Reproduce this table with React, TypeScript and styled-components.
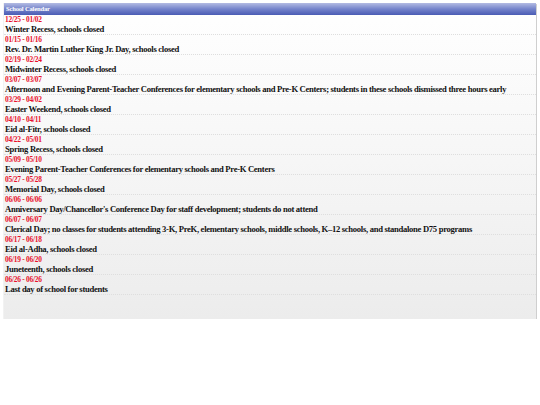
import { FC } from 'react';
import styled, { createGlobalStyle } from 'styled-components';

const events = [
    { dates: '12/25 - 01/02', title: 'Winter Recess, schools closed' },
    { dates: '01/15 - 01/16', title: 'Rev. Dr. Martin Luther King Jr. Day, schools closed' },
    { dates: '02/19 - 02/24', title: 'Midwinter Recess, schools closed' },
    {
        dates: '03/07 - 03/07',
        title: 'Afternoon and Evening Parent-Teacher Conferences for elementary schools and Pre-K Centers; students in these schools dismissed three hours early',
    },
    { dates: '03/29 - 04/02', title: 'Easter Weekend, schools closed' },
    { dates: '04/10 - 04/11', title: 'Eid al-Fitr, schools closed' },
    { dates: '04/22 - 05/01', title: 'Spring Recess, schools closed' },
    { dates: '05/09 - 05/10', title: 'Evening Parent-Teacher Conferences for elementary schools and Pre-K Centers' },
    { dates: '05/27 - 05/28', title: 'Memorial Day, schools closed' },
    {
        dates: '06/06 - 06/06',
        title: "Anniversary Day/Chancellor's Conference Day for staff development; students do not attend",
    },
    {
        dates: '06/07 - 06/07',
        title: 'Clerical Day; no classes for students attending 3-K, PreK, elementary schools, middle schools, K–12 schools, and standalone D75 programs',
    },
    { dates: '06/17 - 06/18', title: 'Eid al-Adha, schools closed' },
    { dates: '06/19 - 06/20', title: 'Juneteenth, schools closed' },
    { dates: '06/26 - 06/26', title: 'Last day of school for students' },
];

const App: FC = () => {
    return (
        <>
            <GlobalStyle />
            <Panel>
                <Header>School Calendar</Header>
                <List>
                    {events.map((ev) => (
                        <Row key={ev.dates + ev.title}>
                            <Dates>{ev.dates}</Dates>
                            <Title>{ev.title}</Title>
                        </Row>
                    ))}
                </List>
            </Panel>
        </>
    );
};

export default App;

const GlobalStyle = createGlobalStyle`
    html, body {
        margin: 0;
        padding: 0;
        background: #fff;
    }
    body {
        padding: 3px 3px 0 3px;
        font-family: 'Liberation Serif', 'Times New Roman', serif;
    }
`;

const Panel = styled.div`
    box-sizing: border-box;
    width: 533px;
    height: 316px;
    display: flex;
    flex-direction: column;
    background: linear-gradient(to bottom, #ffffff 0%, #f6f6f6 50%, #ececec 100%);
    box-shadow: 1px 1px 0 #cfcfcf;
    border-left: 1px solid #f2f2f2;
`;

const Header = styled.div`
    height: 12px;
    line-height: 12px;
    padding-left: 2px;
    color: #fff;
    font-size: 6.6px;
    font-weight: bold;
    letter-spacing: -0.2px;
    background: linear-gradient(to bottom, #b3bbe3 0%, #7584cb 50%, #4a5cb4 100%);
`;

const List = styled.div`
    display: flex;
    flex-direction: column;
`;

const Row = styled.div`
    box-sizing: border-box;
    height: 20px;
    padding: 1px 0 0 1px;
    display: flex;
    flex-direction: column;
    border-bottom: 1px dotted #dedede;
`;

const Dates = styled.div`
    color: #e8102a;
    font-size: 7.4px;
    font-weight: bold;
    letter-spacing: -0.25px;
    line-height: 8px;
`;

const Title = styled.div`
    color: #111;
    font-size: 8.6px;
    font-weight: bold;
    letter-spacing: -0.3px;
    line-height: 10px;
    white-space: nowrap;
`;
